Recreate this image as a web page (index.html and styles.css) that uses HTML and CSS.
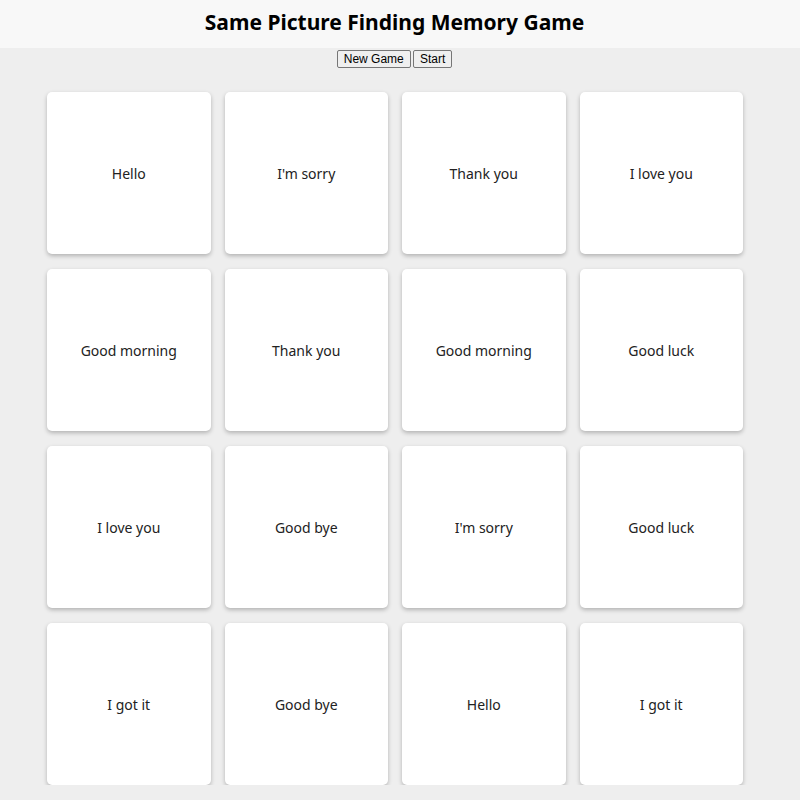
FILE: index.html
```html
<!DOCTYPE html>
<html lang="en">
<head>
    <meta charset="UTF-8">
    <meta name="viewport" content="width=device-width, initial-scale=1.0">
    <title>Same Picture Finding Memory Game</title>
    <link rel="stylesheet" href="styles.css">
</head>
<body>
    <header class="header">
        <h1>Same Picture Finding Memory Game</h1>
    </header>

    <div class="controls">
        <button>New Game</button>
        <button>Start</button>
    </div>

    <div class="board">
        <div class="card">Hello</div>
        <div class="card">I'm sorry</div>
        <div class="card">Thank you</div>
        <div class="card">I love you</div>
        <div class="card">Good morning</div>
        <div class="card">Thank you</div>
        <div class="card">Good morning</div>
        <div class="card">Good luck</div>
        <div class="card">I love you</div>
        <div class="card">Good bye</div>
        <div class="card">I'm sorry</div>
        <div class="card">Good luck</div>
        <div class="card">I got it</div>
        <div class="card">Good bye</div>
        <div class="card">Hello</div>
        <div class="card">I got it</div>
    </div>
</body>
</html>
```

FILE: styles.css
```css
body {
    font-family: "Noto Sans", sans-serif;
    background-color: #eeeeee;
    margin: 0;
    padding: 0;
}
.header {
    background-color: #f8f8f8;
    height: 48px;
    padding-right: 11px;
    display: flex;
    align-items: center;
    justify-content: center;
}
.header h1 {
    margin: 0 0 4px;
    font-size: 21px;
    font-weight: bold;
    color: #000;
}
.controls {
    text-align: center;
    padding: 2px 11px 0 0;
    line-height: 18px;
    height: 20px;
}
.controls button {
    font-family: "Liberation Sans", Arial, sans-serif;
    font-size: 12px;
    line-height: 14px;
    padding: 1px 6px;
    margin: 0 -1px;
    border: 1px solid #767676;
    border-radius: 2px;
    background-color: #efefef;
    color: #000;
    vertical-align: top;
}
.board {
    display: grid;
    grid-template-columns: repeat(4, 163.5px);
    grid-auto-rows: 162px;
    column-gap: 14px;
    row-gap: 15px;
    margin: 22px 0 0 47px;
}
.card {
    background-color: #fff;
    border-radius: 5px;
    box-shadow: 0 2px 4px rgba(0, 0, 0, 0.25);
    display: flex;
    align-items: center;
    justify-content: center;
    font-size: 14px;
    color: #222;
}
```
